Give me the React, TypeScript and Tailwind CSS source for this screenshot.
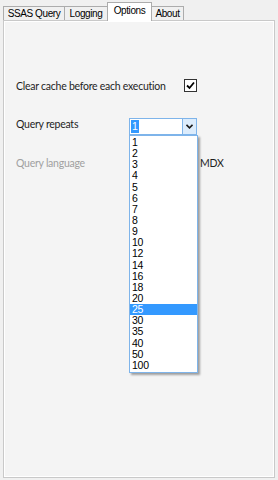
import React from 'react'

const tabFont = { fontFamily: '"Liberation Sans", Arial, sans-serif' }

const repeats = ['1', '2', '3', '4', '5', '6', '7', '8', '9', '10', '12', '14', '16', '18', '20', '25', '30', '35', '40', '50', '100']

function Tab({ label, width, active }: { label: string; width: string; active?: boolean }) {
  if (active) {
    return (
      <div
        className={`${width} h-[19px] -mb-px -ml-px relative z-10 border border-b-0 border-[#acacac] bg-white flex items-start justify-center pt-[1px] text-[10px] tracking-[-0.4px] leading-[14px] text-black whitespace-nowrap`}
        style={tabFont}
      >
        {label}
      </div>
    )
  }
  return (
    <div
      className={`${width} h-[14px] -ml-px first:ml-0 border border-b-0 border-[#acacac] bg-[#f0f0f0] flex items-center justify-center text-[10px] tracking-[-0.4px] leading-[13px] text-black whitespace-nowrap`}
      style={tabFont}
    >
      {label}
    </div>
  )
}

export default function App() {
  return (
    <div className="w-[278px] h-[480px] bg-[#f0f0f0] flex flex-col pt-[2px] pl-[3px] pr-[3px] pb-[2px] overflow-hidden">
      {/* TABS */}
      <div className="flex items-end h-[18px]">
        <Tab label="SSAS Query" width="w-[62px]" />
        <Tab label="Logging" width="w-[44px]" />
        <Tab label="Options" width="w-[45px]" active />
        <Tab label="About" width="w-[33px]" />
      </div>

      {/* PANEL */}
      <div
        className="flex-1 border border-[#c9c9c9] bg-[#f4f4f4] shadow-[inset_1px_1px_0_#ffffff,inset_-1px_-1px_0_#ffffff] pt-[58px] pl-[12px] text-[10.5px] tracking-[-0.25px] text-[#1e1e1e]"
        style={{ fontFamily: 'Lato, "Open Sans", sans-serif' }}
      >
        <div className="flex items-center h-[13px]">
          <div className="w-[168px] leading-[14px] whitespace-nowrap">Clear cache before each execution</div>
          <div className="w-[13px] h-[13px] border border-[#333333] bg-white flex items-center justify-center">
            <svg width="9" height="9" viewBox="0 0 9 9">
              <path d="M1 4.5 L3.5 7 L8 1.5" fill="none" stroke="#000" strokeWidth="1.8" />
            </svg>
          </div>
        </div>

        <div className="flex items-start mt-[26px]">
          <div className="w-[113px] leading-[14px] -mt-px whitespace-nowrap">Query repeats</div>
          <div className="relative">
            <div className="w-[68px] h-[17px] border border-[#7eb4ea] bg-white flex">
              <div className="flex-1 flex items-center pl-[1px]">
                <span
                  className="bg-[#3399ff] text-white text-[10.5px] leading-[13px] px-[1px]"
                  style={{ fontFamily: '"Liberation Sans", Arial, sans-serif' }}
                >
                  1
                </span>
              </div>
              <div className="w-[14px] border-l border-[#7eb4ea] bg-[#dcecfc] flex items-center justify-center">
                <svg width="7" height="5" viewBox="0 0 7 5">
                  <path d="M0.5 0.8 L3.5 3.8 L6.5 0.8" fill="none" stroke="#1a1a1a" strokeWidth="1.6" />
                </svg>
              </div>
            </div>

            {/* DROPDOWN LIST */}
            <div
              className="absolute left-0 top-full z-20 w-[69px] border border-[#7eb4ea] bg-white pt-[1px] pb-[1px] shadow-[2px_2px_2px_rgba(0,0,0,0.35)] text-[10.5px] text-black"
              style={{ fontFamily: '"Liberation Sans", Arial, sans-serif' }}
            >
              {repeats.map((r) => (
                <div
                  key={r}
                  className={`h-[11.15px] leading-[11.15px] pl-[2px] ${r === '25' ? 'bg-[#3399ff] text-white' : ''}`}
                >
                  {r}
                </div>
              ))}
            </div>
          </div>
        </div>

        <div className="flex items-center mt-[21px] h-[14px]">
          <div className="w-[184px] leading-[14px] text-[#a0a0a0] whitespace-nowrap">Query language</div>
          <div className="leading-[14px]">MDX</div>
        </div>
      </div>
    </div>
  )
}
